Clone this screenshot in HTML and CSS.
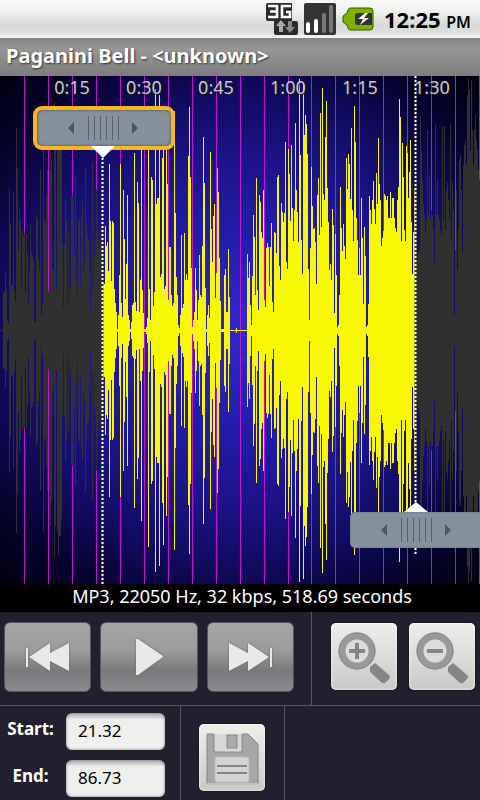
FILE: index.html
```
<!DOCTYPE html>
<html lang="en">
  <head>
    <title>Paganini Bell</title>
    <meta charset="UTF-8">
    <meta name="viewport" content="width=device-width, initial-scale=1.0">
    <link rel="stylesheet" href="styles.css">
  </head>
  <body>
    <div class="statusbar">
      <svg width="32" height="32" viewBox="0 0 32 32">
        <path d="M2 0h24v18h4q2 0 2 2v10q0 2-2 2H10q-2 0-2-2V18H2q-2 0-2-2V2q0-2 2-2z" fill="#2b2b2b"/>
        <path d="M2 3h9v11H2M4 8.5h8M25 3h-9v11h8V9h-4" fill="none" stroke="#fff" stroke-width="2.6"/>
        <path d="M15 17l5 6h-3v6h-4v-6h-3z" fill="#aaa"/>
        <path d="M24 30l5-6h-3v-6h-4v6h-3z" fill="#888"/>
      </svg>
      <svg width="32" height="32" viewBox="0 0 32 32">
        <rect x="0" y="0" width="32" height="32" rx="2" fill="#333"/>
        <path d="M4 21v7" stroke="#fff" stroke-width="4" stroke-linecap="round"/>
        <path d="M12 18v10" stroke="#fff" stroke-width="4" stroke-linecap="round"/>
        <path d="M20 12v16" stroke="#777" stroke-width="4" stroke-linecap="round"/>
        <path d="M27 4v24" stroke="#777" stroke-width="4" stroke-linecap="round"/>
      </svg>
      <svg width="32" height="32" viewBox="0 0 32 32">
        <path d="M8 5h20q3 0 3 3v16q0 3-3 3H8q-2 0-3-5l-4-3v-6l4-3q1-5 3-5z" fill="#7db300" stroke="#3c5800"/>
        <path d="M16 10h14v12H16q-3 0-3-3v-6q0-3 3-3z" fill="#333"/>
        <path d="M23 10l-7 6h5l-3 6 9-7h-5l4-5z" fill="#fff"/>
      </svg>
      <span class="clock">12:25 <small>PM</small></span>
    </div>
    <h1 class="title">Paganini Bell - &lt;unknown&gt;</h1>

    <div class="wave">
      <svg id="plot" viewBox="0 0 480 508" preserveAspectRatio="none">
        <path id="grid" stroke="#c410d0" shape-rendering="crispEdges"/>
        <path id="muted" stroke="#303030"/>
        <path id="playing" stroke="#f8f800"/>
        <path d="M102.5 74V508M415.5 0V478" stroke="#303030" stroke-width="2"/>
        <path d="M102.5 74V508M415.5 0V478" stroke="#fff" stroke-width="2" stroke-dasharray="2 2"/>
      </svg>
      <div class="times">
        <span>0:15</span><span>0:30</span><span>0:45</span><span>1:00</span><span>1:15</span><span>1:30</span>
      </div>
      <button class="marker marker-start" aria-label="Start marker">
        <svg width="134" height="36" viewBox="0 0 134 36">
          <path d="M31 18l6-6v12zM101 18l-6-6v12z" fill="#4c555d"/>
          <path d="M51.5 6v24M57.5 6v24M63.5 6v24M69.5 6v24M75.5 6v24M81.5 6v24" stroke="#59626a"/>
        </svg>
      </button>
      <button class="marker marker-end" aria-label="End marker">
        <svg width="134" height="36" viewBox="0 0 134 36">
          <path d="M31 18l6-6v12zM101 18l-6-6v12z" fill="#4c555d"/>
          <path d="M51.5 6v24M57.5 6v24M63.5 6v24M69.5 6v24M75.5 6v24M81.5 6v24" stroke="#59626a"/>
        </svg>
      </button>
    </div>
    <p class="info">MP3, 22050 Hz, 32 kbps, 518.69 seconds</p>

    <div class="controls">
      <div class="transport">
        <button class="key" aria-label="Rewind">
          <svg width="48" height="32" viewBox="0 0 48 32">
            <path d="M2 7h2v19H2zM5 16L26 2v10L45 2v28L26 20v10z" fill="#e8eae8"/>
          </svg>
        </button>
        <button class="key key-play" aria-label="Play">
          <svg width="32" height="38" viewBox="0 0 32 38">
            <path d="M3 1h2l25 17v1L5 37H3z" fill="#e8eae8"/>
          </svg>
        </button>
        <button class="key" aria-label="Fast forward">
          <svg width="48" height="32" viewBox="0 0 48 32">
            <path d="M46 7h-2v19h2zM43 16L22 2v10L3 2v28l19-10v10z" fill="#e8eae8"/>
          </svg>
        </button>
      </div>
      <div class="zoom">
        <button class="tile" aria-label="Zoom in">
          <svg width="66" height="66" viewBox="0 0 66 66">
            <path d="M39 43l5-4 14 12q2 2 0 4l-4 4q-2 1-4-1L39 48z" fill="#858585"/>
            <circle cx="26" cy="27" r="15" fill="#dcdddb" stroke="#989998" stroke-width="7"/>
            <circle cx="26" cy="27" r="18" fill="none" stroke="#858685"/>
            <path d="M26 19v16M18 27h16" stroke="#858585" stroke-width="4"/>
          </svg>
        </button>
        <button class="tile" aria-label="Zoom out">
          <svg width="66" height="66" viewBox="0 0 66 66">
            <path d="M39 43l5-4 14 12q2 2 0 4l-4 4q-2 1-4-1L39 48z" fill="#858585"/>
            <circle cx="26" cy="27" r="15" fill="#dcdddb" stroke="#989998" stroke-width="7"/>
            <circle cx="26" cy="27" r="18" fill="none" stroke="#858685"/>
            <path d="M18 27h16" stroke="#858585" stroke-width="4"/>
          </svg>
        </button>
      </div>
    </div>

    <div class="bottom">
      <div class="fields">
        <label for="start">Start:</label>
        <input id="start" type="text" value="21.32">
        <label for="end">End:</label>
        <input id="end" type="text" value="86.73">
      </div>
      <div class="save">
        <button class="tile" aria-label="Save">
          <svg width="66" height="66" viewBox="0 0 66 66">
            <path d="M8 9h7v18h28V9h6l10 10v40H8z" fill="#a6a7a6"/>
            <path d="M8 59V9h7v18h28V9h6l10 10v40" fill="none" stroke="#848584"/>
            <path d="M8 59h51" stroke="#c2c3c2" stroke-width="2"/>
            <path d="M16 9h26v17H16z" fill="#d8d9d7"/>
            <rect x="28" y="10" width="10" height="13" fill="#a9aaa9" stroke="#888"/>
            <rect x="16" y="32" width="34" height="25" rx="2" fill="#d5d6d4" stroke="#bbb"/>
            <path d="M18 41h30M18 48h30" stroke="#858585" stroke-width="2"/>
          </svg>
        </button>
      </div>
      <div class="rest"></div>
    </div>
    <script src="wave.js"></script>
  </body>
</html>
```
FILE: styles.css
```
* { box-sizing:border-box; }
body
{
    margin:0;
    min-height:100vh;
    display:flex;
    flex-direction:column;
    background:#22202f;
    color:#fff;
    font-family:"Noto Sans", "Open Sans", sans-serif;
    font-size:18px;
}
button { padding:0; border:0; }
svg { display:block; }

.statusbar
{
    height:38px;
    display:flex;
    justify-content:flex-end;
    align-items:center;
    gap:6px;
    padding-right:9px;
    background:linear-gradient(#f8f9f7, #f1f2f0 30%, #d8dad7 65%, #dcdedb 85%, #f7f8f7);
    color:#000;
}
.clock
{
    margin-left:4px;
    padding-top:2px;
    font-size:22px;
    line-height:36px;
    font-weight:bold;
    white-space:nowrap;
}
.clock small { font-size:16px; font-weight:600; }
.title
{
    margin:0;
    height:38px;
    padding-left:6px;
    font-size:20px;
    line-height:36px;
    background:linear-gradient(#848484, #969696 30%, #7d7d7d);
    text-shadow:1px 1px 2px #333;
}

.wave
{
    flex:1;
    min-height:300px;
    position:relative;
    overflow:hidden;
    background:radial-gradient(circle at center, #3029cc 0, #261eb0 80px, #1c148a 170px, #120c64 230px, #060330 290px, #00000c 350px);
}
#plot { position:absolute; width:100%; height:100%; }
.times
{
    position:absolute;
    top:0;
    left:0;
    width:100%;
    padding-left:7.5%;
    display:flex;
    color:#c8c8c8;
    line-height:22px;
    text-shadow:1px 1px 1px #222;
}
.times span { flex:0 0 16.2162%; text-align:center; }

.marker
{
    position:absolute;
    width:134px;
    height:36px;
    border-radius:5px;
    background:#85919b;
    box-shadow:inset 0 0 2px #56606a;
}
.marker::after
{
    content:"";
    position:absolute;
    left:54px;
    border:12px solid transparent;
}
.marker-start { left:calc(21.5% - 66px); top:34px; box-shadow:0 0 0 4px #f6b722, inset 0 0 3px #444; }
.marker-start::after { top:36px; border-top-color:#fff; border-bottom:0; }
.marker-end { left:calc(86.6% - 66px); bottom:36px; }
.marker-end::after { bottom:36px; border-bottom-color:#fff; border-top:0; border-bottom-width:10px; }

.info
{
    margin:0;
    padding:0 0 4px 4px;
    background:#000;
    line-height:24px;
    text-align:center;
}

.controls
{
    display:flex;
    height:94px;
    border-bottom:1px solid #57556f;
}
.transport
{
    flex:0 0 65%;
    display:flex;
    gap:9px;
    padding:10px 17px 0 4px;
    border-right:1px solid #57556f;
}
.key
{
    flex:88;
    height:70px;
    display:flex;
    justify-content:center;
    align-items:center;
    border:1px solid #555461;
    border-radius:6px;
    background:linear-gradient(#a5a6a4, #9c9d9b 40%, #79797e 70%, #8c8a8b);
}
.key-play { flex:99; }
.key svg { filter:drop-shadow(0 0 1px #666); }
.zoom
{
    flex:1;
    display:flex;
    justify-content:flex-end;
    gap:12px;
    padding:11px 5px 0 0;
}
.tile
{
    width:66px;
    height:67px;
    border-radius:5px;
    background:linear-gradient(#eeefed, #c8cac7);
    box-shadow:0 0 2px #000, inset 0 0 3px #fff;
}

.bottom { display:flex; height:94px; }
.fields
{
    flex:0 0 37.7%;
    display:grid;
    grid-template-columns:51px 99px;
    gap:10px;
    padding:7px 0 0 5px;
    align-content:start;
    border-right:1px solid #57556f;
}
.fields label
{
    font-size:17px;
    font-weight:bold;
    line-height:32px;
    text-align:center;
}
.fields input
{
    width:100%;
    height:37px;
    padding:0 12px 2px;
    border:0;
    border-radius:6px;
    background:linear-gradient(#b4b5b3, #d8d9d7 5px, #eeefed 6px, #f0f1ef);
    box-shadow:inset 0 0 3px #777;
    color:#000;
    font:17px "Noto Sans", "Open Sans", sans-serif;
}
.save
{
    flex:0 0 21.6%;
    display:flex;
    justify-content:center;
    padding-top:18px;
    border-right:1px solid #57556f;
}
.rest { flex:1; }
```
FILE: wave.js
```
// half height of the wave for each column
const levels = [
  0,0,0,38,38,57,40,10,7,141,106,45,45,138,40,28,202,162,80,121,
  110,43,100,95,97,37,97,75,27,60,105,77,75,70,8,8,115,110,70,60,
  160,15,25,200,110,107,135,160,38,160,195,170,60,60,228,195,40,200,224,205,
  205,190,85,23,85,130,110,24,100,30,40,133,135,135,75,153,50,32,110,110,
  45,115,128,60,70,162,107,95,90,60,20,40,168,40,75,85,140,100,90,80,
  100,90,48,47,46,104,84,88,59,166,109,49,109,107,41,27,18,1,15,55,
  166,27,13,140,91,31,66,135,15,10,1,8,25,27,177,28,19,148,127,18,
  50,190,40,17,1,1,3,12,216,41,10,153,150,24,38,241,126,132,132,235,
  53,56,172,214,41,44,185,146,30,83,83,35,24,27,219,117,53,35,5,2,
  15,95,22,26,97,50,56,50,174,223,153,62,3,10,18,62,40,10,30,75,
  35,33,84,193,147,42,1,15,25,12,178,101,68,114,126,32,57,162,138,72,
  29,1,1,1,55,61,18,18,81,33,0,0,0,0,0,0,2,0,0,0,
  0,0,0,0,0,0,0,76,52,68,25,5,54,115,93,35,152,40,20,135,
  128,98,92,140,30,23,82,87,83,44,83,107,28,18,98,97,77,153,155,64,
  50,127,118,108,117,188,68,61,181,156,109,185,122,89,120,207,140,118,88,251,
  175,90,56,248,195,215,206,176,61,10,82,163,124,101,102,88,46,135,152,95,
  217,103,242,136,130,193,229,142,108,60,66,50,121,105,17,96,55,3,5,35,
  143,102,79,106,84,71,172,141,176,166,131,202,120,89,224,188,112,90,55,82,
  55,132,92,26,103,74,3,5,26,134,120,106,130,149,121,106,157,126,192,146,
  130,84,92,99,136,134,130,134,112,112,138,112,132,132,112,102,98,130,143,231,
  213,89,187,153,100,89,184,177,132,158,190,108,56,98,140,153,150,70,78,80,
  214,180,150,125,115,98,110,200,115,155,110,120,115,100,68,206,115,150,115,110,
  100,95,204,110,204,100,140,148,130,110,206,90,148,120,15,80,140,60,100,170,
  175,140,78,165,185,190,165,235,252,240,180,250,200,165,200,215,190,180,160,150
];
const middle = 254;
const selStart = 102;
const selEnd = 416;

function bars(from, to)
{
    let d = "";
    for (let x = from; x < to; x++)
    {
	d += "M" + (x + 0.5) + " " + (middle - levels[x]) + "v" + (levels[x] * 2 + 1);
    }
    return d;
}

let lines = "";
for (let i = 1; i <= 20; i++)
{
    lines += "M" + (Math.round(i * 23.96) + 0.5) + " 0V508";
}
document.getElementById("grid").setAttribute("d", lines);
document.getElementById("muted").setAttribute("d", bars(0, selStart) + bars(selEnd, levels.length));
document.getElementById("playing").setAttribute("d", bars(selStart, selEnd));
```
